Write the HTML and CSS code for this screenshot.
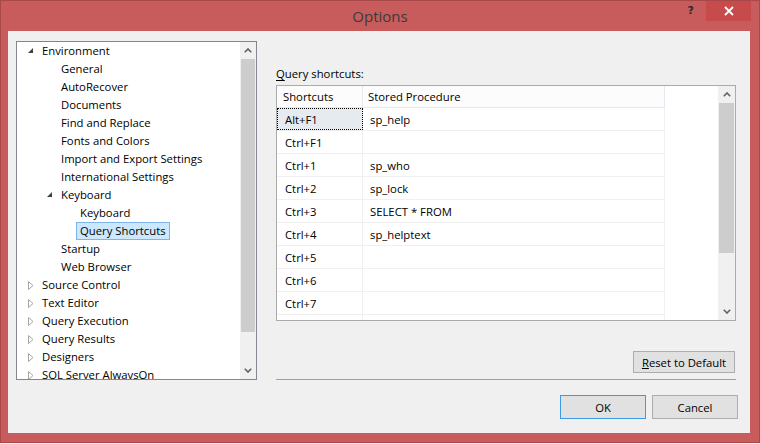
FILE: index.html
```html
<!DOCTYPE html>
<html>
<head>
<meta charset="utf-8">
<link rel="stylesheet" href="styles.css">
</head>
<body>
<div class="window">
  <div class="titlebar">
    <div></div>
    <div class="title">Options</div>
    <div class="controls">
      <span class="help">?</span>
      <span class="close"><svg width="10" height="10" viewBox="0 0 10 10"><path d="M1 1 L9 9 M9 1 L1 9" stroke="#fff" stroke-width="1.8"/></svg></span>
    </div>
  </div>
  <div class="client">
    <div class="main">
      <div class="tree">
        <div class="tree-items">
          <div class="node l0"><span class="exp"><svg width="6" height="6" viewBox="0 0 6 6"><polygon points="5,0 5,5 0,5" fill="#404040"/></svg></span><span class="txt">Environment</span></div>
          <div class="node l1"><span class="exp"></span><span class="txt">General</span></div>
          <div class="node l1"><span class="exp"></span><span class="txt">AutoRecover</span></div>
          <div class="node l1"><span class="exp"></span><span class="txt">Documents</span></div>
          <div class="node l1"><span class="exp"></span><span class="txt">Find and Replace</span></div>
          <div class="node l1"><span class="exp"></span><span class="txt">Fonts and Colors</span></div>
          <div class="node l1"><span class="exp"></span><span class="txt">Import and Export Settings</span></div>
          <div class="node l1"><span class="exp"></span><span class="txt">International Settings</span></div>
          <div class="node l1"><span class="exp"><svg width="6" height="6" viewBox="0 0 6 6"><polygon points="5,0 5,5 0,5" fill="#404040"/></svg></span><span class="txt">Keyboard</span></div>
          <div class="node l2"><span class="exp"></span><span class="txt">Keyboard</span></div>
          <div class="node l2"><span class="exp"></span><span class="txt sel">Query Shortcuts</span></div>
          <div class="node l1"><span class="exp"></span><span class="txt">Startup</span></div>
          <div class="node l1"><span class="exp"></span><span class="txt">Web Browser</span></div>
          <div class="node l0"><span class="exp"><svg width="6" height="9" viewBox="0 0 6 9"><polygon points="0.5,0.5 5,4.5 0.5,8.5" fill="none" stroke="#A6A6A6"/></svg></span><span class="txt">Source Control</span></div>
          <div class="node l0"><span class="exp"><svg width="6" height="9" viewBox="0 0 6 9"><polygon points="0.5,0.5 5,4.5 0.5,8.5" fill="none" stroke="#A6A6A6"/></svg></span><span class="txt">Text Editor</span></div>
          <div class="node l0"><span class="exp"><svg width="6" height="9" viewBox="0 0 6 9"><polygon points="0.5,0.5 5,4.5 0.5,8.5" fill="none" stroke="#A6A6A6"/></svg></span><span class="txt">Query Execution</span></div>
          <div class="node l0"><span class="exp"><svg width="6" height="9" viewBox="0 0 6 9"><polygon points="0.5,0.5 5,4.5 0.5,8.5" fill="none" stroke="#A6A6A6"/></svg></span><span class="txt">Query Results</span></div>
          <div class="node l0"><span class="exp"><svg width="6" height="9" viewBox="0 0 6 9"><polygon points="0.5,0.5 5,4.5 0.5,8.5" fill="none" stroke="#A6A6A6"/></svg></span><span class="txt">Designers</span></div>
          <div class="node l0"><span class="exp"><svg width="6" height="9" viewBox="0 0 6 9"><polygon points="0.5,0.5 5,4.5 0.5,8.5" fill="none" stroke="#A6A6A6"/></svg></span><span class="txt">SQL Server AlwaysOn</span></div>
        </div>
        <div class="vscroll tree-scroll">
          <div class="arrow"><svg width="8" height="5" viewBox="0 0 8 5"><polyline points="0.8,4.2 4,1 7.2,4.2" fill="none" stroke="#606060" stroke-width="1.6"/></svg></div>
          <div class="thumb"></div>
          <div class="track"></div>
          <div class="arrow"><svg width="8" height="5" viewBox="0 0 8 5"><polyline points="0.8,0.8 4,4 7.2,0.8" fill="none" stroke="#606060" stroke-width="1.6"/></svg></div>
        </div>
      </div>
      <div class="right">
        <div class="label"><u>Q</u>uery shortcuts:</div>
        <div class="grid">
          <div class="grid-body">
            <div class="row head">
              <div class="c1">Shortcuts</div>
              <div class="c2">Stored Procedure</div>
            </div>
            <div class="row"><div class="c1 focus">Alt+F1</div><div class="c2">sp_help</div></div>
            <div class="row"><div class="c1">Ctrl+F1</div><div class="c2"></div></div>
            <div class="row"><div class="c1">Ctrl+1</div><div class="c2">sp_who</div></div>
            <div class="row"><div class="c1">Ctrl+2</div><div class="c2">sp_lock</div></div>
            <div class="row"><div class="c1">Ctrl+3</div><div class="c2">SELECT * FROM</div></div>
            <div class="row"><div class="c1">Ctrl+4</div><div class="c2">sp_helptext</div></div>
            <div class="row"><div class="c1">Ctrl+5</div><div class="c2"></div></div>
            <div class="row"><div class="c1">Ctrl+6</div><div class="c2"></div></div>
            <div class="row"><div class="c1">Ctrl+7</div><div class="c2"></div></div>
            <div class="row"><div class="c1"></div><div class="c2"></div></div>
          </div>
          <div class="vscroll grid-scroll">
            <div class="arrow"><svg width="8" height="5" viewBox="0 0 8 5"><polyline points="0.8,4.2 4,1 7.2,4.2" fill="none" stroke="#606060" stroke-width="1.6"/></svg></div>
            <div class="thumb"></div>
            <div class="track"></div>
            <div class="arrow"><svg width="8" height="5" viewBox="0 0 8 5"><polyline points="0.8,0.8 4,4 7.2,0.8" fill="none" stroke="#606060" stroke-width="1.6"/></svg></div>
          </div>
        </div>
        <div class="reset-row"><button class="btn reset"><u>R</u>eset to Default</button></div>
        <div class="sep"></div>
      </div>
    </div>
    <div class="footer">
      <button class="btn ok">OK</button>
      <button class="btn">Cancel</button>
    </div>
  </div>
</div>
</body>
</html>
```

FILE: styles.css
```css
* { box-sizing: border-box; }
html, body { margin: 0; padding: 0; background: #F0F0F0; }
body { font-family: "Open Sans", "Noto Sans", sans-serif; font-size: 11.3px; color: #000; }

.window {
  width: 760px;
  height: 443px;
  background: #C85C5C;
  border: 1px solid #A84848;
}

.titlebar {
  height: 30px;
  display: grid;
  grid-template-columns: 1fr auto 1fr;
  align-items: start;
}
.title {
  font-size: 15px;
  color: #3A3A3A;
  line-height: 30px;
}
.controls {
  display: flex;
  justify-content: flex-end;
  align-items: flex-start;
  padding-right: 8px;
}
.help {
  font-family: "DejaVu Sans", sans-serif;
  font-weight: bold;
  font-size: 11px;
  color: #2A2A2A;
  line-height: 20px;
  margin-right: 12px;
}
.close {
  width: 45px;
  height: 20px;
  background: #C74B4B;
  display: flex;
  align-items: center;
  justify-content: center;
}

.client {
  margin-left: 7px;
  width: 742px;
  height: 402px;
  background: #F0F0F0;
  padding: 10px 12px 0 8px;
}

.main { display: flex; align-items: flex-start; }

.tree {
  width: 241px;
  height: 339px;
  border: 1px solid #828790;
  background: #fff;
  display: flex;
  overflow: hidden;
}
.tree-items { flex: 1; overflow: hidden; }
.node {
  height: 18px;
  line-height: 18px;
  display: flex;
  align-items: center;
  white-space: nowrap;
}
.node.l0 { padding-left: 11px; }
.node.l1 { padding-left: 30px; }
.node.l2 { padding-left: 49px; }
.exp { width: 14px; height: 18px; display: flex; align-items: center; }
.exp svg { display: block; }
.txt { line-height: 16px; }
.txt.sel {
  background: #CCE8FF;
  border: 1px solid #7EB4EA;
  margin-left: -4px;
  padding: 0 3px;
  line-height: 16px;
}

.vscroll {
  width: 16px;
  background: #F0F0F0;
  display: flex;
  flex-direction: column;
}
.vscroll .arrow {
  height: 17px;
  display: flex;
  align-items: center;
  justify-content: center;
  flex: none;
}
.vscroll .thumb { background: #CDCDCD; margin: 0 1px; flex: none; }
.vscroll .track { flex: 1; }
.tree-scroll .thumb { height: 273px; }
.grid-scroll { width: 17px; }
.grid-scroll .thumb { height: 150px; }

.right {
  margin-left: 19px;
  width: 460px;
  display: flex;
  flex-direction: column;
}
.label { margin-top: 25px; line-height: 15px; color: #000; }
.label u { text-decoration-thickness: 1px; text-underline-offset: 2px; }

.grid {
  margin-top: 4px;
  height: 236px;
  border: 1px solid #ABABAB;
  background: #fff;
  display: flex;
  overflow: hidden;
}
.grid-body { flex: 1; overflow: hidden; }
.row {
  display: flex;
  height: 23px;
  border-bottom: 1px solid #F0F0F0;
  width: 388px;
}
.row > div {
  display: flex;
  align-items: center;
  white-space: nowrap;
}
.c1 { width: 86px; border-right: 1px solid #F0F0F0; padding-left: 8px; }
.c2 { width: 302px; border-right: 1px solid #F0F0F0; padding-left: 7px; }
.row.head {
  height: 22px;
  background: #FCFCFC;
  border-bottom: 1px solid #E3EAF3;
}
.row.head .c1 { padding-left: 6px; border-right-color: #E8E8E8; }
.row.head .c2 { padding-left: 5px; border-right-color: #E3EAF3; }
.c1.focus {
  background: #E6EBF0;
  outline: 1px dotted #000;
  outline-offset: -1px;
}

.reset-row { display: flex; justify-content: flex-end; margin-top: 30px; padding-right: 1px; }
.btn {
  font-family: inherit;
  font-size: 11.3px;
  color: #000;
  background: #E1E1E1;
  border: 1px solid #ADADAD;
  padding: 0;
  margin: 0;
}
.reset { width: 102px; height: 22px; }
.sep { margin-top: 6px; height: 1px; background: #A0A0A0; }

.footer {
  margin-top: 15px;
  display: flex;
  justify-content: flex-end;
  gap: 6px;
}
.footer .btn { width: 86px; height: 24px; }
.btn.ok { border-color: #3C9AE8; }
```
